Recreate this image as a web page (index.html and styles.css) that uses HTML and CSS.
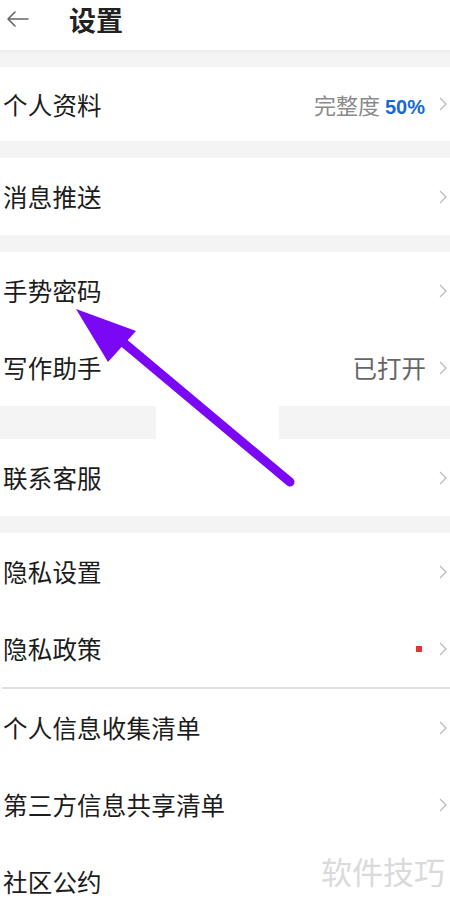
FILE: index.html
```html
<!DOCTYPE html>
<html>
<head>
	<meta charset="utf-8" />
	<title>设置</title>
	<link rel="stylesheet" href="styles.css">
</head>
<body>
	<div class="header">
		<svg class="back" width="24" height="18" viewBox="0 0 24 18"><path d="M22 9H2M9 2L2 9l7 7" fill="none" stroke="#666" stroke-width="1.6" stroke-linecap="round" stroke-linejoin="round"/></svg>
		<div class="title">设置</div>
	</div>
	<div class="gap first"></div>
	<div class="row short">
		<div class="label">个人资料</div>
		<div class="extra"><span class="muted">完整度</span> <b class="pct">50%</b></div>
		<svg class="chev" width="8" height="14" viewBox="0 0 8 14"><path d="M1 1l6 6-6 6" fill="none" stroke="#bbb" stroke-width="1.3"/></svg>
	</div>
	<div class="gap"></div>
	<div class="row">
		<div class="label">消息推送</div>
		<svg class="chev" width="8" height="14" viewBox="0 0 8 14"><path d="M1 1l6 6-6 6" fill="none" stroke="#bbb" stroke-width="1.3"/></svg>
	</div>
	<div class="gap"></div>
	<div class="row">
		<div class="label">手势密码</div>
		<svg class="chev" width="8" height="14" viewBox="0 0 8 14"><path d="M1 1l6 6-6 6" fill="none" stroke="#bbb" stroke-width="1.3"/></svg>
	</div>
	<div class="row">
		<div class="label">写作助手</div>
		<div class="extra state">已打开</div>
		<svg class="chev" width="8" height="14" viewBox="0 0 8 14"><path d="M1 1l6 6-6 6" fill="none" stroke="#bbb" stroke-width="1.3"/></svg>
	</div>
	<div class="gap tall"></div>
	<div class="row">
		<div class="label">联系客服</div>
		<svg class="chev" width="8" height="14" viewBox="0 0 8 14"><path d="M1 1l6 6-6 6" fill="none" stroke="#bbb" stroke-width="1.3"/></svg>
	</div>
	<div class="gap"></div>
	<div class="row">
		<div class="label">隐私设置</div>
		<svg class="chev" width="8" height="14" viewBox="0 0 8 14"><path d="M1 1l6 6-6 6" fill="none" stroke="#bbb" stroke-width="1.3"/></svg>
	</div>
	<div class="row">
		<div class="label">隐私政策</div>
		<div class="dot"></div>
		<svg class="chev" width="8" height="14" viewBox="0 0 8 14"><path d="M1 1l6 6-6 6" fill="none" stroke="#bbb" stroke-width="1.3"/></svg>
	</div>
	<div class="divider"></div>
	<div class="row">
		<div class="label">个人信息收集清单</div>
		<svg class="chev" width="8" height="14" viewBox="0 0 8 14"><path d="M1 1l6 6-6 6" fill="none" stroke="#bbb" stroke-width="1.3"/></svg>
	</div>
	<div class="row">
		<div class="label">第三方信息共享清单</div>
		<svg class="chev" width="8" height="14" viewBox="0 0 8 14"><path d="M1 1l6 6-6 6" fill="none" stroke="#bbb" stroke-width="1.3"/></svg>
	</div>
	<div class="row">
		<div class="label">社区公约</div>
	</div>

	<svg class="annot" width="450" height="904" viewBox="0 0 450 904">
		<rect x="156" y="404" width="123" height="35" fill="#fff"/>
		<line x1="290" y1="482" x2="118" y2="338" stroke="#7a08f4" stroke-width="9" stroke-linecap="round"/>
		<polygon points="76,309 136,331 108,362" fill="#7a08f4"/>
	</svg>
	<div class="watermark">软件技巧</div>
</body>
</html>
```

FILE: styles.css
```css
body {
	margin: 0;
	width: 450px;
	height: 904px;
	overflow: hidden;
	position: relative;
	background: #fff;
	font-family: "Noto Sans CJK SC", "Noto Sans", sans-serif;
	color: #1c1c1c;
}
.header {
	height: 50px;
	display: flex;
	align-items: flex-start;
	padding: 0 0 0 6px;
	box-sizing: border-box;
}
.header .back {
	margin: 10px 0 0 0;
}
.header .title {
	margin: 0 0 0 39px;
	font-size: 27px;
	font-weight: bold;
	color: #222;
}
.gap {
	height: 17px;
	background: #f4f4f4;
}
.gap.first {
	background: linear-gradient(#ececec, #f4f4f4 5px);
}
.gap.tall {
	height: 33px;
}
.row {
	height: 77px;
	display: flex;
	align-items: center;
	padding: 0 3px 0 3px;
	box-sizing: border-box;
}
.row.short {
	height: 74px;
}
.row .label {
	flex: 1;
	font-size: 24.5px;
	letter-spacing: 0.2px;
}
.row .extra {
	font-size: 22px;
	margin: 0 14px 0 0;
}
.row .extra .muted {
	color: #8a8a8a;
}
.row .extra .pct {
	color: #1769d4;
	font-family: "Liberation Sans", sans-serif;
	font-weight: bold;
	font-size: 20px;
}
.row .extra.state {
	font-size: 24.5px;
	color: #666;
	margin-right: 13px;
}
.row .dot {
	width: 6px;
	height: 6px;
	background: #e53333;
	margin: 0 17px 0 0;
}
.divider {
	height: 2px;
	margin: 0 0 0 2px;
	background: #e0e0e0;
}
.annot {
	position: absolute;
	left: 0;
	top: 0;
}
.watermark {
	position: absolute;
	right: 5px;
	top: 848px;
	font-size: 31px;
	color: #dadada;
}
```
